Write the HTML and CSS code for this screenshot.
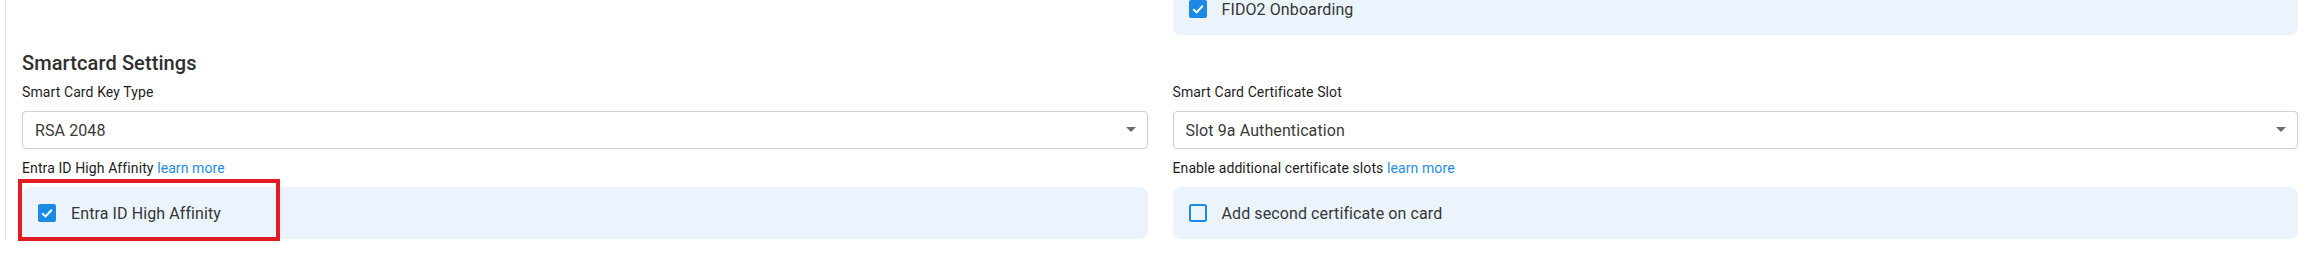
FILE: index.html
```html
<!DOCTYPE html>
<html lang="en">
<head>
<meta charset="utf-8">
<title>Smartcard Settings</title>
<link rel="stylesheet" href="styles.css">
</head>
<body>
<div class="frame">
  <div class="grid top-row">
    <div class="cell"></div>
    <div class="cell">
      <div class="check-panel">
        <svg class="cb" width="18" height="18" viewBox="0 0 18 18"><rect x="0" y="0" width="18" height="18" rx="2" fill="#1a8ae6"/><path d="M4.2 9.2 L7.6 12.4 L13.8 5.8" fill="none" stroke="#fff" stroke-width="2"/></svg>
        <span class="check-text">FIDO2 Onboarding</span>
      </div>
    </div>
  </div>

  <h2 class="section-title">Smartcard Settings</h2>

  <div class="grid">
    <div class="field">
      <div class="label">Smart Card Key Type</div>
      <div class="select">
        <span class="select-value">RSA 2048</span>
        <svg class="arrow" width="10" height="5" viewBox="0 0 10 5"><path d="M0 0 H10 L5 5 Z" fill="#6b6b6b"/></svg>
      </div>
      <div class="label label-gap">Entra ID High Affinity <a class="link" href="#">learn more</a></div>
      <div class="check-panel">
        <svg class="cb" width="18" height="18" viewBox="0 0 18 18"><rect x="0" y="0" width="18" height="18" rx="2" fill="#1a8ae6"/><path d="M4.2 9.2 L7.6 12.4 L13.8 5.8" fill="none" stroke="#fff" stroke-width="2"/></svg>
        <span class="check-text">Entra ID High Affinity</span>
      </div>
    </div>
    <div class="field">
      <div class="label">Smart Card Certificate Slot</div>
      <div class="select">
        <span class="select-value">Slot 9a Authentication</span>
        <svg class="arrow" width="10" height="5" viewBox="0 0 10 5"><path d="M0 0 H10 L5 5 Z" fill="#6b6b6b"/></svg>
      </div>
      <div class="label label-gap">Enable additional certificate slots <a class="link" href="#">learn more</a></div>
      <div class="check-panel">
        <svg class="cb" width="18" height="18" viewBox="0 0 18 18"><rect x="1" y="1" width="16" height="16" rx="1.5" fill="none" stroke="#1a8ae6" stroke-width="2"/></svg>
        <span class="check-text">Add second certificate on card</span>
      </div>
    </div>
  </div>
</div>
<div class="highlight"></div>
</body>
</html>
```

FILE: styles.css
```css
html, body {
  margin: 0;
  padding: 0;
  background: #ffffff;
}

body {
  position: relative;
  width: 2312px;
  height: 257px;
  overflow: hidden;
  font-family: Roboto, "Liberation Sans", Arial, sans-serif;
  letter-spacing: 0.1px;
  color: #222;
}

.frame {
  margin-left: 5px;
  border-left: 1px solid #e6e6e6;
  padding: 0 14px 0 16px;
  height: 257px;
  box-sizing: border-box;
}

.grid {
  display: grid;
  grid-template-columns: 1fr 1fr;
  column-gap: 25px;
}

.top-row {
  margin-top: -17px;
}

.section-title {
  margin: 14px 0 0;
  font-size: 20px;
  line-height: 28px;
  font-weight: 500;
  color: #2f2f2f;
}

.field {
  display: flex;
  flex-direction: column;
}

.label {
  margin-top: 5px;
  margin-bottom: 9px;
  font-size: 14px;
  line-height: 20px;
  color: #1e1e1e;
}

.label-gap {
  margin-top: 9px;
}

.link {
  color: #1f8ce6;
  text-decoration: none;
}

.select {
  height: 38px;
  box-sizing: border-box;
  border: 1px solid #cfd0d5;
  border-radius: 4px;
  background: #fff;
  display: flex;
  align-items: center;
  justify-content: space-between;
  padding: 0 11px 0 12px;
}

.select-value {
  font-size: 16px;
  color: #3a3a3a;
}

.arrow {
  display: block;
  margin-top: -1px;
}

.check-panel {
  height: 52px;
  box-sizing: border-box;
  background: #ebf4fc;
  border-radius: 8px;
  display: flex;
  align-items: center;
  padding-left: 16px;
  gap: 15px;
}

.cb {
  display: block;
  flex: none;
}

.check-text {
  font-size: 16px;
  color: #363636;
}

.highlight {
  position: absolute;
  left: 18px;
  top: 179px;
  width: 262px;
  height: 62px;
  box-sizing: border-box;
  border: 4px solid #e31b23;
}
```
